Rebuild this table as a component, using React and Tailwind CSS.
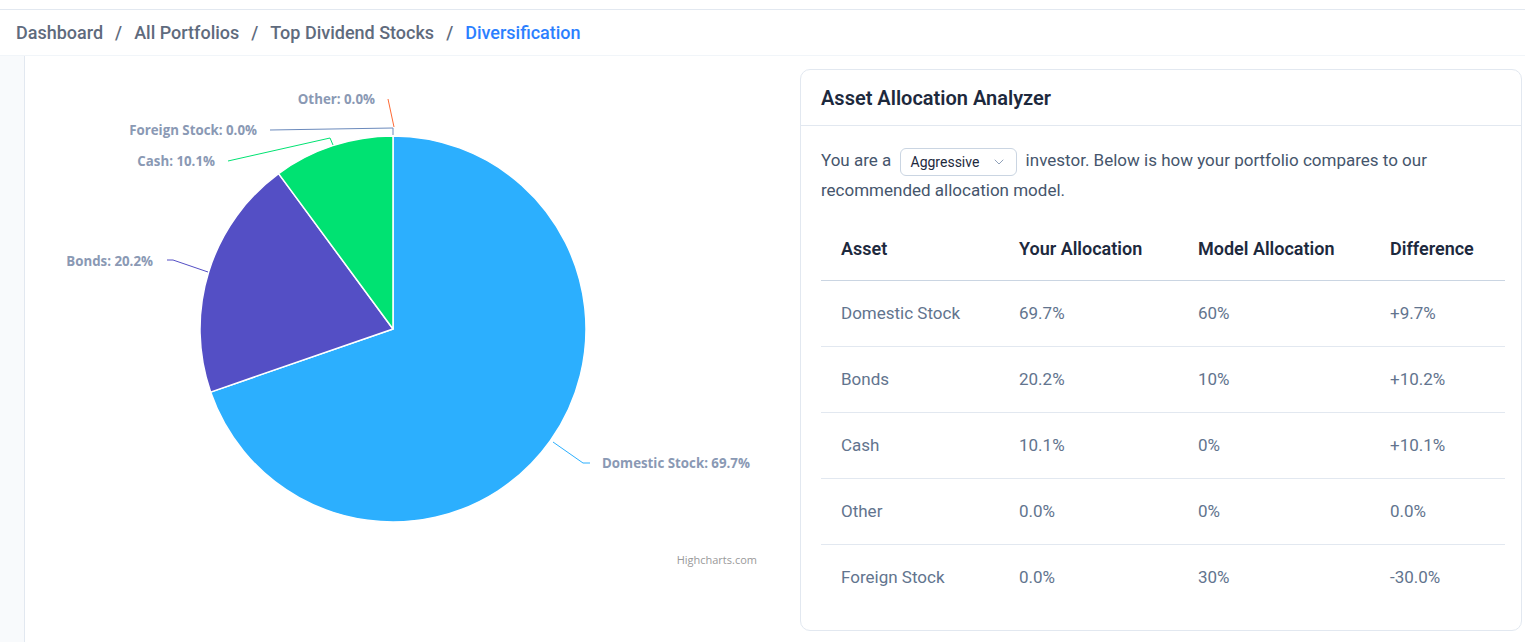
import { ChevronDown } from 'lucide-react';

const rows = [
  { asset: 'Domestic Stock', yours: '69.7%', model: '60%', diff: '+9.7%' },
  { asset: 'Bonds', yours: '20.2%', model: '10%', diff: '+10.2%' },
  { asset: 'Cash', yours: '10.1%', model: '0%', diff: '+10.1%' },
  { asset: 'Other', yours: '0.0%', model: '0%', diff: '0.0%' },
  { asset: 'Foreign Stock', yours: '0.0%', model: '30%', diff: '-30.0%' },
];

const crumbs = ['Dashboard', 'All Portfolios', 'Top Dividend Stocks'];

// pie geometry, center + radius in svg coords
const CX = 368;
const CY = 273;
const R = 193;

function point(frac) {
  const a = frac * 2 * Math.PI;
  return [CX + R * Math.sin(a), CY - R * Math.cos(a)];
}

function slice(from, to) {
  const [x1, y1] = point(from);
  const [x2, y2] = point(to);
  const large = to - from > 0.5 ? 1 : 0;
  return `M ${CX} ${CY} L ${x1} ${y1} A ${R} ${R} 0 ${large} 1 ${x2} ${y2} Z`;
}

function PieChart() {
  const labelStyle = { fontFamily: '"Open Sans", "DejaVu Sans", sans-serif', fontSize: 13.3, fontWeight: 700 };
  return (
    <svg width="750" height="586" viewBox="0 0 750 586" className="block">
      <path d={slice(0, 0.697)} fill="#2caffe" stroke="#ffffff" strokeWidth="1.5" strokeLinejoin="round" />
      <path d={slice(0.697, 0.899)} fill="#544fc5" stroke="#ffffff" strokeWidth="1.5" strokeLinejoin="round" />
      <path d={slice(0.899, 0.99999)} fill="#00e272" stroke="#ffffff" strokeWidth="1.5" strokeLinejoin="round" />

      {/* connectors */}
      <polyline points="363,43 369,71" fill="none" stroke="#fe6a35" strokeWidth="1" />
      <polyline points="245,74 368,72 368,79" fill="none" stroke="#6b8abc" strokeWidth="1" />
      <polyline points="203,105 305,82 308,89" fill="none" stroke="#00e272" strokeWidth="1" />
      <polyline points="142,204 148,204 183,216" fill="none" stroke="#544fc5" strokeWidth="1" />
      <polyline points="528,386 558,407 565,407" fill="none" stroke="#2caffe" strokeWidth="1" />

      <g fill="#8a99b4" style={labelStyle}>
        <text x="350" y="48" textAnchor="end">Other: 0.0%</text>
        <text x="232" y="79" textAnchor="end">Foreign Stock: 0.0%</text>
        <text x="190" y="110" textAnchor="end">Cash: 10.1%</text>
        <text x="128" y="210" textAnchor="end">Bonds: 20.2%</text>
        <text x="577" y="412">Domestic Stock: 69.7%</text>
      </g>

      <text
        x="732"
        y="508"
        textAnchor="end"
        fill="#999999"
        style={{ fontFamily: '"Open Sans", "DejaVu Sans", sans-serif', fontSize: 11 }}
      >
        Highcharts.com
      </text>
    </svg>
  );
}

export default function App() {
  return (
    <div className="w-[1525px] h-[642px] overflow-hidden bg-white font-['Roboto',sans-serif] flex flex-col">
      <div className="h-[10px] border-b border-slate-200 shrink-0" />

      {/* Breadcrumb */}
      <nav className="h-[46px] shrink-0 border-b border-slate-100 flex items-center pl-4 text-[18px] font-medium">
        {crumbs.map((c) => (
          <span key={c} className="flex items-center text-[#5f6b7d]">
            {c}
            <span className="mx-[12px]">/</span>
          </span>
        ))}
        <span className="text-blue-500">Diversification</span>
      </nav>

      <div className="flex flex-1 min-h-0">
        <aside className="w-[25px] shrink-0 bg-slate-50 border-r border-slate-200" />

        <section className="w-[750px] shrink-0">
          <PieChart />
        </section>

        {/* Analyzer card */}
        <div className="ml-[25px] mt-[13px] w-[722px] h-[562px] shrink-0 rounded-[10px] border border-slate-200 bg-white flex flex-col">
          <div className="h-[56px] shrink-0 border-b border-slate-200 flex items-center px-5">
            <h2 className="text-[20px] font-semibold text-slate-800">Asset Allocation Analyzer</h2>
          </div>

          <div className="px-5 pt-[20px]">
            <p className="text-[17px] leading-[29px] text-slate-600">
              You are a{' '}
              <span className="inline-flex items-center gap-3 align-middle h-[28px] pl-[10px] pr-[9px] mx-1 rounded-md border border-slate-300 text-[14px] text-slate-800 leading-none">
                Aggressive
                <ChevronDown className="w-4 h-4 text-slate-400" strokeWidth={1.5} />
              </span>{' '}
              investor. Below is how your portfolio compares to our recommended allocation model.
            </p>

            <table className="mt-[13px] w-[684px] table-fixed border-collapse text-[17px]">
              <colgroup>
                <col className="w-[178px]" />
                <col className="w-[179px]" />
                <col className="w-[192px]" />
                <col className="w-[135px]" />
              </colgroup>
              <thead>
                <tr className="h-[63px] border-b border-slate-300 text-slate-800 text-[18px]">
                  <th className="text-left font-semibold pl-5">Asset</th>
                  <th className="text-left font-semibold pl-5">Your Allocation</th>
                  <th className="text-left font-semibold pl-5">Model Allocation</th>
                  <th className="text-left font-semibold pl-5">Difference</th>
                </tr>
              </thead>
              <tbody className="text-slate-500">
                {rows.map((r, i) => (
                  <tr key={r.asset} className={`h-[66px] ${i < rows.length - 1 ? 'border-b border-slate-200' : ''}`}>
                    <td className="pl-5">{r.asset}</td>
                    <td className="pl-5">{r.yours}</td>
                    <td className="pl-5">{r.model}</td>
                    <td className="pl-5">{r.diff}</td>
                  </tr>
                ))}
              </tbody>
            </table>
          </div>
        </div>
      </div>
    </div>
  );
}
